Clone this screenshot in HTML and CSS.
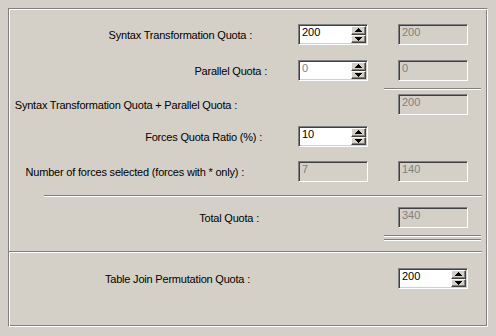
FILE: index.html
```html
<!DOCTYPE html>
<html lang="en">
<head>
    <meta charset="UTF-8">
    <title>Quota Settings</title>
    <link rel="stylesheet" href="styles.css">
</head>
<body>
    <div class="frame">
        <!-- syntax transformation -->
        <div class="row row-1">
            <span class="lbl lbl-syntax">Syntax Transformation Quota :</span>
            <div class="spin">
                <span class="val">200</span>
                <span class="arrows"><span class="btn"><svg width="7" height="4"><path d="M0 4h7L3.5 0z"/></svg></span><span class="btn"><svg width="7" height="4"><path d="M0 0h7L3.5 4z"/></svg></span></span>
            </div>
            <div class="edit off col-2">200</div>
        </div>

        <!-- parallel -->
        <div class="row row-2">
            <span class="lbl lbl-parallel">Parallel Quota :</span>
            <div class="spin">
                <span class="val dim">0</span>
                <span class="arrows"><span class="btn"><svg width="7" height="4"><path d="M0 4h7L3.5 0z"/></svg></span><span class="btn"><svg width="7" height="4"><path d="M0 0h7L3.5 4z"/></svg></span></span>
            </div>
            <div class="edit off col-2">0</div>
        </div>

        <div class="etch short sep-a"></div>

        <div class="row row-3">
            <span class="lbl lbl-sum">Syntax Transformation Quota + Parallel Quota :</span>
            <div class="edit off col-2">200</div>
        </div>

        <!-- forces -->
        <div class="row row-4">
            <span class="lbl lbl-ratio">Forces Quota Ratio (%) :</span>
            <div class="spin">
                <span class="val">10</span>
                <span class="arrows"><span class="btn"><svg width="7" height="4"><path d="M0 4h7L3.5 0z"/></svg></span><span class="btn"><svg width="7" height="4"><path d="M0 0h7L3.5 4z"/></svg></span></span>
            </div>
        </div>

        <div class="row row-5">
            <span class="lbl lbl-forces">Number of forces selected (forces with * only) :</span>
            <div class="edit off">7</div>
            <div class="edit off col-2">140</div>
        </div>

        <div class="etch long"></div>

        <div class="row row-6">
            <span class="lbl lbl-total">Total Quota :</span>
            <div class="edit off col-2">340</div>
        </div>

        <div class="etch short sep-b"></div>
        <div class="etch short sep-c"></div>

        <div class="etch divider"></div>

        <!-- table join -->
        <div class="row row-7">
            <span class="lbl lbl-join">Table Join Permutation Quota :</span>
            <div class="spin col-2">
                <span class="val">200</span>
                <span class="arrows"><span class="btn"><svg width="7" height="4"><path d="M0 4h7L3.5 0z"/></svg></span><span class="btn"><svg width="7" height="4"><path d="M0 0h7L3.5 4z"/></svg></span></span>
            </div>
        </div>
    </div>
</body>
</html>
```

FILE: styles.css
```css
* { margin: 0; padding: 0; box-sizing: border-box; }
body { background: #d4d0c8; font-family: "Liberation Sans", Arial, sans-serif; font-size: 11px; color: #000; }

.frame { margin: 8px; width: 480px; height: 319px; border: 1px solid; border-color: #808080 #fff #fff #808080; box-shadow: inset 1px 1px #fff, inset -1px -1px #808080; }

.row { display: grid; grid-template-columns: 289px 70px 30px 70px; height: 21px; }
.row-1 { margin-top: 15px; }
.row-2 { margin-top: 15px; }
.row-3 { margin-top: 4px; }
.row-4 { margin-top: 11px; }
.row-5 { margin-top: 14px; }
.row-6 { margin-top: 10px; }
.row-7 { margin-top: 15px; }

.lbl { grid-column: 1; text-align: right; padding-top: 5px; line-height: 13px; white-space: nowrap; letter-spacing: -0.2px; }
.lbl-syntax { padding-right: 46px; }
.lbl-parallel { padding-right: 31px; }
.lbl-sum { padding-right: 61px; }
.lbl-ratio { padding-right: 36px; }
.lbl-forces { padding-right: 54px; }
.lbl-total { padding-right: 39px; }
.lbl-join { padding-right: 48px; }

.col-2 { grid-column: 4; }

.edit, .spin { height: 21px; border: 1px solid; border-color: #808080 #fff #fff #808080; box-shadow: inset 1px 1px #404040, inset -1px -1px #d4d0c8; background: #fff; line-height: 13px; padding: 1px 2px 0 3px; }
.edit.off { background: #d4d0c8; color: #808080; }
.spin { display: flex; justify-content: space-between; padding: 1px 1px 1px 3px; }
.dim { color: #808080; }

.arrows { display: flex; flex-direction: column; width: 15px; }
.btn { flex: 1; display: flex; align-items: center; justify-content: center; background: #d4d0c8; border: 1px solid; border-color: #fff #404040 #404040 #fff; box-shadow: inset -1px -1px #808080; }
.btn svg { display: block; shape-rendering: crispEdges; }

.etch { height: 2px; border-top: 1px solid #808080; border-bottom: 1px solid #fff; }
.short { margin-left: 375px; width: 97px; }
.sep-a { margin-top: 7px; }
.sep-b { margin-top: 7px; }
.sep-c { margin-top: 2px; }
.long { margin-top: 13px; margin-left: 35px; width: 438px; }
.divider { margin-top: 10px; width: 473px; }
```
